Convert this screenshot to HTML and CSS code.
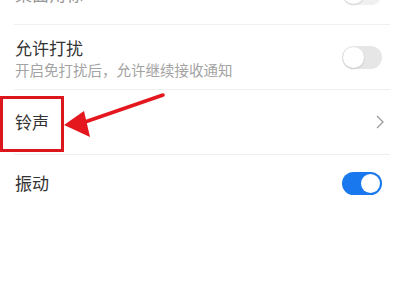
FILE: index.html
```html
<!DOCTYPE html>
<html lang="zh-CN">
<head>
    <meta charset="UTF-8">
    <title>通知设置</title>
    <link rel="stylesheet" href="styles.css">
</head>
<body>
    <div class="settings">
        <div class="row row-top">
            <div class="row-title">桌面角标</div>
            <div class="switch"></div>
        </div>
        <div class="row row-tall">
            <div class="row-text">
                <div class="row-title">允许打扰</div>
                <div class="row-sub">开启免打扰后，允许继续接收通知</div>
            </div>
            <div class="switch"></div>
        </div>
        <div class="row row-tall row-mark">
            <div class="row-title">铃声</div>
            <svg class="chevron" width="8" height="14" viewBox="0 0 8 14">
                <path d="M1 1 L7 7 L1 13" fill="none" stroke="#9a9a9a" stroke-width="1.3"/>
            </svg>
            <div class="mark-box"></div>
            <svg class="mark-arrow" width="200" height="65" viewBox="0 0 200 65">
                <line x1="163" y1="5" x2="82" y2="33" stroke="#e3171d" stroke-width="3.5" stroke-linecap="round"/>
                <polygon points="64,35 84,21 90,47" fill="#e3171d"/>
            </svg>
        </div>
        <div class="row row-last">
            <div class="row-title">振动</div>
            <div class="switch on"></div>
        </div>
    </div>
</body>
</html>
```

FILE: styles.css
```css
body {
    margin: 0;
    background-color: #fff;
    font-family: "Noto Sans CJK SC", "Noto Sans", sans-serif;
    overflow: hidden;
}

.settings {
    margin-top: -37px;
}

.row {
    display: flex;
    align-items: center;
    justify-content: space-between;
    margin: 0 10px 0 14px;
    padding-left: 1px;
    border-bottom: 1px solid #efefef;
    height: 61px;
}

.row-tall {
    height: 64px;
}

.row-last {
    border-bottom: none;
    height: 56px;
}

.row-title {
    font-size: 17px;
    color: #333;
    line-height: 20px;
}

.row-top .row-title {
    color: #999;
}

.row-top .switch {
    background-color: #f0f0f0;
}

.row-text {
    display: flex;
    flex-direction: column;
    gap: 3px;
    padding-top: 2px;
}

.row-sub {
    font-size: 14.5px;
    color: #a3a3a3;
    line-height: 17px;
}

.switch {
    position: relative;
    width: 40px;
    height: 23px;
    border-radius: 12px;
    background-color: #e6e6e6;
    margin-right: 8px;
}

.switch::after {
    content: "";
    position: absolute;
    top: 1px;
    left: 1px;
    width: 21px;
    height: 21px;
    border-radius: 50%;
    background-color: #fff;
    box-shadow: 0 1px 2px rgba(0, 0, 0, 0.15);
}

.switch.on {
    background-color: #1a78ee;
}

.switch.on::after {
    left: auto;
    right: 2px;
    top: 2px;
    width: 19px;
    height: 19px;
    box-shadow: none;
}

.chevron {
    margin-right: 6px;
}

.row-mark {
    position: relative;
}

.mark-box {
    position: absolute;
    left: -14px;
    top: 6px;
    width: 58px;
    height: 50px;
    border: 3px solid #dd151c;
}

.mark-arrow {
    position: absolute;
    left: -14px;
    top: 0;
}
```
